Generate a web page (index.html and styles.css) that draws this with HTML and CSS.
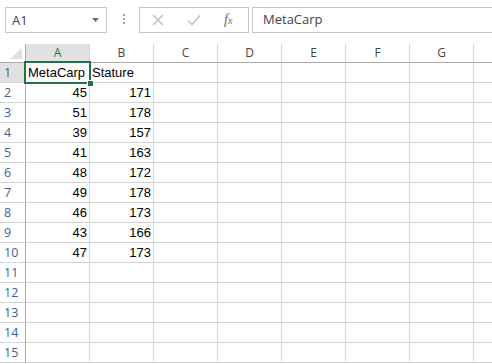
FILE: index.html
```html
<!DOCTYPE html>
<html lang="en">
<head>
  <meta charset="UTF-8" />
  <title>Book1 - Sheet1</title>
  <link rel="stylesheet" href="styles.css">
</head>
<body>
  <div class="toolbar">
    <div class="name-box">
      <span>A1</span>
      <svg class="caret" width="7" height="4" viewBox="0 0 7 4"><path d="M0 0h7L3.5 4z" fill="#6d6d6d"/></svg>
    </div>
    <div class="grip"><i></i><i></i><i></i></div>
    <div class="fx-buttons">
      <svg width="12" height="12" viewBox="0 0 12 12"><path d="M1 1l10 10M11 1L1 11" stroke="#c4c4c4" stroke-width="1.6" fill="none"/></svg>
      <svg width="14" height="12" viewBox="0 0 14 12"><path d="M1 6.5l4 4L13 1.5" stroke="#c4c4c4" stroke-width="1.6" fill="none"/></svg>
      <span class="fx">f<sub>x</sub></span>
    </div>
    <div class="formula">MetaCarp</div>
  </div>

  <div class="viewport">
    <div class="sheet" id="sheet">
      <div class="corner">
        <svg width="12" height="11" viewBox="0 0 12 11"><path d="M12 0v11H0z" fill="#dfdfdf"/></svg>
      </div>
      <div class="col-head active">A</div>
      <div class="col-head">B</div>
      <div class="col-head">C</div>
      <div class="col-head">D</div>
      <div class="col-head">E</div>
      <div class="col-head">F</div>
      <div class="col-head">G</div>
      <div class="col-head"></div>
      <div class="selection"><span class="handle"></span></div>
    </div>
  </div>

  <script>
    const sheet = document.getElementById("sheet");
    const data = [
      ["MetaCarp", "Stature"],
      [45, 171], [51, 178], [39, 157], [41, 163], [48, 172],
      [49, 178], [46, 173], [43, 166], [47, 173]
    ];

    for (let r = 1; r <= 15; r++) {
      const row = data[r - 1] || [];
      let html = `<div class="row-head${r === 1 ? " active" : ""}">${r}</div>`;
      for (let c = 0; c < 8; c++) {
        const v = row[c];
        const cls = typeof v === "number" ? "cell num" : "cell";
        html += `<div class="${cls}">${v === undefined ? "" : v}</div>`;
      }
      sheet.insertAdjacentHTML("beforeend", html);
    }
  </script>
</body>
</html>
```

FILE: styles.css
```css
* {
  box-sizing: border-box;
  margin: 0;
  padding: 0;
}

body {
  width: 492px;
  height: 364px;
  overflow: hidden;
  background: #ffffff;
  font-family: 'Liberation Sans', Arial, sans-serif;
}

/* formula bar */
.toolbar {
  display: flex;
  align-items: flex-start;
  height: 44px;
  padding: 7px 0 0 5px;
  overflow: hidden;
  color: #444444;
  font-family: 'Open Sans', sans-serif;
}

.name-box {
  display: flex;
  align-items: center;
  justify-content: space-between;
  width: 102px;
  height: 26px;
  border: 1px solid #c6c6c6;
  padding: 0 7px 0 6px;
  font-size: 13px;
}

.grip {
  display: flex;
  flex-direction: column;
  gap: 2px;
  width: 2px;
  margin: 7px 14px 0 16px;
}

.grip i {
  width: 2px;
  height: 2px;
  background: #a0a0a0;
}

.fx-buttons {
  display: flex;
  align-items: center;
  width: 110px;
  height: 26px;
  border: 1px solid #c6c6c6;
  padding: 0 10px 0 12px;
  gap: 22px;
}

.fx-buttons svg:nth-child(2) {
  margin-left: 1px;
}

.fx {
  font-family: 'Liberation Serif', serif;
  font-style: italic;
  font-size: 14px;
  color: #666666;
  margin-left: 1px;
}

.fx sub {
  font-size: 10px;
  vertical-align: 0;
}

.formula {
  flex: 1;
  height: 26px;
  margin-left: 3px;
  margin-right: -4px;
  border: 1px solid #c6c6c6;
  padding-left: 10px;
  font-size: 13px;
  line-height: 23px;
}

/* grid */
.viewport {
  width: 492px;
  height: 320px;
  overflow: hidden;
}

.sheet {
  position: relative;
  display: grid;
  grid-template-columns: 26px repeat(8, 64px);
  grid-auto-rows: 20px;
  grid-template-rows: 19px;
  font-size: 13px;
}

.corner {
  display: flex;
  align-items: flex-end;
  justify-content: flex-end;
  padding: 0 3px 3px 0;
  border-right: 1px solid #ababab;
  border-bottom: 1px solid #ababab;
}

.col-head {
  border-right: 1px solid #d4d4d4;
  border-bottom: 1px solid #ababab;
  text-align: center;
  font-family: 'Open Sans', sans-serif;
  font-size: 12px;
  line-height: 18px;
  color: #444444;
}

.row-head {
  border-right: 1px solid #ababab;
  border-bottom: 1px solid #d4d4d4;
  padding-left: 4px;
  font-family: 'Open Sans', sans-serif;
  font-size: 12.5px;
  line-height: 19px;
  color: #3f5e8e;
}

.col-head.active,
.row-head.active {
  background: #e1e1e1;
  color: #217346;
}

.cell {
  border-right: 1px solid #d4d4d4;
  border-bottom: 1px solid #d4d4d4;
  padding: 0 2px;
  line-height: 19px;
  color: #000000;
  white-space: nowrap;
  overflow: visible;
}

.cell.num {
  text-align: right;
}

/* active cell outline */
.selection {
  position: absolute;
  left: 24px;
  top: 17px;
  width: 67px;
  height: 23px;
  border: 2px solid #217346;
  pointer-events: none;
}

.handle {
  position: absolute;
  right: -5px;
  bottom: -5px;
  width: 7px;
  height: 7px;
  background: #217346;
  border: 1px solid #ffffff;
}
```
